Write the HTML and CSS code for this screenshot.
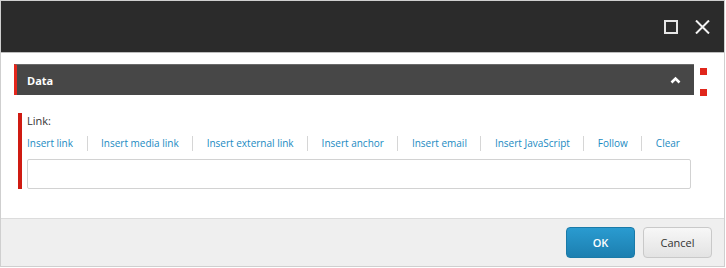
FILE: index.html
```html
<!DOCTYPE html>
<html lang="en">
<head>
    <meta charset="UTF-8">
    <title>Data</title>
    <link rel="stylesheet" href="styles.css">
</head>
<body>
    <div class="dialog">
        <!-- Title bar -->
        <div class="titlebar">
            <span class="win-btn">
                <svg width="14" height="14" viewBox="0 0 14 14"><rect x="1" y="1" width="12" height="12" fill="none" stroke="#e6e6e6" stroke-width="2"/></svg>
            </span>
            <span class="win-btn">
                <svg width="15" height="14" viewBox="0 0 15 14"><path d="M1 0.5 L14 13.5 M14 0.5 L1 13.5" stroke="#f2f2f2" stroke-width="2"/></svg>
            </span>
        </div>

        <div class="content">
            <!-- Section -->
            <div class="section-row">
                <div class="section-bar">
                    <span class="section-title">Data</span>
                    <svg class="chevron" width="11" height="8" viewBox="0 0 11 8"><path d="M1.5 6.5 L5.5 2.5 L9.5 6.5" fill="none" stroke="#fff" stroke-width="2.6"/></svg>
                </div>
                <div class="markers">
                    <span class="marker"></span>
                    <span class="marker"></span>
                </div>
            </div>

            <!-- Field -->
            <div class="field">
                <div class="field-label">Link:</div>
                <div class="field-links">
                    <a href="#">Insert link</a>
                    <a href="#">Insert media link</a>
                    <a href="#">Insert external link</a>
                    <a href="#">Insert anchor</a>
                    <a href="#">Insert email</a>
                    <a href="#">Insert JavaScript</a>
                    <a href="#">Follow</a>
                    <a href="#">Clear</a>
                </div>
                <input class="field-input" type="text">
            </div>
        </div>

        <!-- Footer -->
        <div class="footer">
            <button class="btn btn-primary">OK</button>
            <button class="btn">Cancel</button>
        </div>
    </div>
</body>
</html>
```

FILE: styles.css
```css
body {
    margin: 0;
    font-family: "Open Sans", Arial, sans-serif;
    background-color: #fff;
}
.dialog {
    width: 723px;
    height: 265px;
    border: 1px solid #cfcfcf;
    display: flex;
    flex-direction: column;
    background-color: #fff;
}
.titlebar {
    height: 51px;
    background-color: #2b2b2b;
    border-bottom: 1px solid #bdbdbd;
    display: flex;
    justify-content: flex-end;
    align-items: center;
    padding-right: 14px;
    gap: 17px;
}
.win-btn {
    display: flex;
}
.content {
    flex: 1;
    padding: 11px 0 0 13px;
}
.section-row {
    display: flex;
    align-items: flex-start;
}
.section-bar {
    width: 680px;
    height: 31px;
    background-color: #474747;
    border-top: 1px solid #6a6a6a;
    border-left: 3px solid #e3261c;
    display: flex;
    align-items: center;
    justify-content: space-between;
    padding: 0 13px 0 10px;
    box-sizing: border-box;
}
.section-title {
    color: #fff;
    font-size: 11px;
    font-weight: 700;
}
.chevron {
    margin-top: -1px;
}
.markers {
    display: flex;
    flex-direction: column;
    justify-content: space-between;
    height: 28px;
    margin: 4px 0 0 6px;
}
.marker {
    width: 7px;
    height: 7px;
    background-color: #e0261b;
}
.field {
    margin: 17px 0 0 4px;
    border-left: 4px solid #cf1b12;
    padding: 0 0 0 5px;
    width: 664px;
}
.field-label {
    font-size: 11px;
    color: #333;
    line-height: 14px;
    padding-top: 1px;
}
.field-links {
    display: flex;
    align-items: center;
    margin-top: 7px;
    height: 16px;
    white-space: nowrap;
}
.field-links a {
    color: #1a8ac2;
    text-decoration: none;
    font-size: 10px;
    padding: 0 13.5px;
    border-left: 1px solid #d6d6d6;
    line-height: 15px;
}
.field-links a:first-child {
    padding-left: 0;
    border-left: none;
}
.field-input {
    display: block;
    margin-top: 8px;
    width: 664px;
    height: 30px;
    box-sizing: border-box;
    border: 1px solid #d2d2d2;
    border-radius: 2px;
}
.footer {
    height: 47px;
    background-color: #efefef;
    border-top: 1px solid #dcdcdc;
    display: flex;
    justify-content: flex-end;
    align-items: center;
    gap: 8px;
    padding-right: 12px;
}
.btn {
    width: 69px;
    height: 31px;
    font-family: "Open Sans", Arial, sans-serif;
    font-size: 11px;
    color: #333;
    border: 1px solid #c9c9c9;
    border-radius: 4px;
    background: linear-gradient(#f7f7f7, #e3e3e3);
}
.btn-primary {
    color: #fff;
    font-weight: 600;
    border-color: #1a7aa8;
    background: linear-gradient(#2a9bd0, #1c7fb0);
}
```
